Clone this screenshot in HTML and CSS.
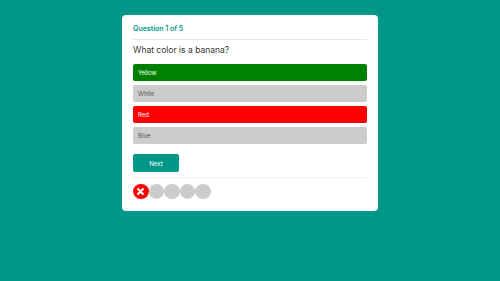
FILE: index.html
```html
<!DOCTYPE html>
<html lang="en">
<head>
    <meta charset="UTF-8">
    <meta name="viewport" content="width=device-width, initial-scale=1.0">
    <title>Quiz</title>
    <link rel="stylesheet" href="styles.css">
</head>
<body>
    <div class="quiz">
        <div class="quiz-header">Question 1 of 5</div>
        <p class="question">What color is a banana?</p>
        <div class="answers">
            <div class="answer correct">Yellow</div>
            <div class="answer">White</div>
            <div class="answer wrong">Red</div>
            <div class="answer">Blue</div>
        </div>
        <button class="next-btn">Next</button>
        <div class="progress">
            <span class="dot miss">
                <svg viewBox="0 0 16 16" width="15" height="15">
                    <path d="M5.4 5.4 L10.6 10.6 M10.6 5.4 L5.4 10.6" stroke="#fff" stroke-width="2.2" stroke-linecap="round"/>
                </svg>
            </span>
            <span class="dot"></span>
            <span class="dot"></span>
            <span class="dot"></span>
            <span class="dot"></span>
        </div>
    </div>
</body>
</html>
```

FILE: styles.css
```css
body {
    margin: 0;
    font-family: Inter, "Open Sans", sans-serif;
    background-color: #009688;
    height: 281px;
    overflow: hidden;
}
.quiz {
    width: 256px;
    box-sizing: border-box;
    margin: 15px auto 0;
    padding: 9px 11px 12px;
    background-color: #fff;
    border-radius: 4px;
}
.quiz-header {
    font-size: 7px;
    font-weight: 600;
    color: #009688;
    line-height: 10px;
    padding-bottom: 5px;
    border-bottom: 1px solid #e8e8e8;
}
.question {
    margin: 4px 0 0;
    font-size: 8.5px;
    line-height: 12px;
    color: #333;
}
.answers {
    display: flex;
    flex-direction: column;
    gap: 4px;
    margin-top: 8px;
}
.answer {
    height: 17px;
    line-height: 17px;
    padding-left: 5px;
    border-radius: 2px;
    background-color: #ccc;
    color: #555;
    font-size: 6px;
}
.answer.correct {
    background-color: #008000;
    color: #fff;
}
.answer.wrong {
    background-color: #ff0000;
    color: #fff;
}
.next-btn {
    display: block;
    margin-top: 10px;
    width: 46px;
    height: 18px;
    padding: 0;
    border: none;
    border-radius: 2px;
    background-color: #009688;
    color: #fff;
    font-family: inherit;
    font-size: 6.2px;
}
.progress {
    display: flex;
    margin-top: 5px;
    padding-top: 5.5px;
    border-top: 1px solid #eee;
}
.dot {
    width: 15.5px;
    height: 15px;
    border-radius: 50%;
    background-color: #ccc;
    display: flex;
    align-items: center;
    justify-content: center;
}
.dot.miss {
    background-color: #ff0000;
}
```
